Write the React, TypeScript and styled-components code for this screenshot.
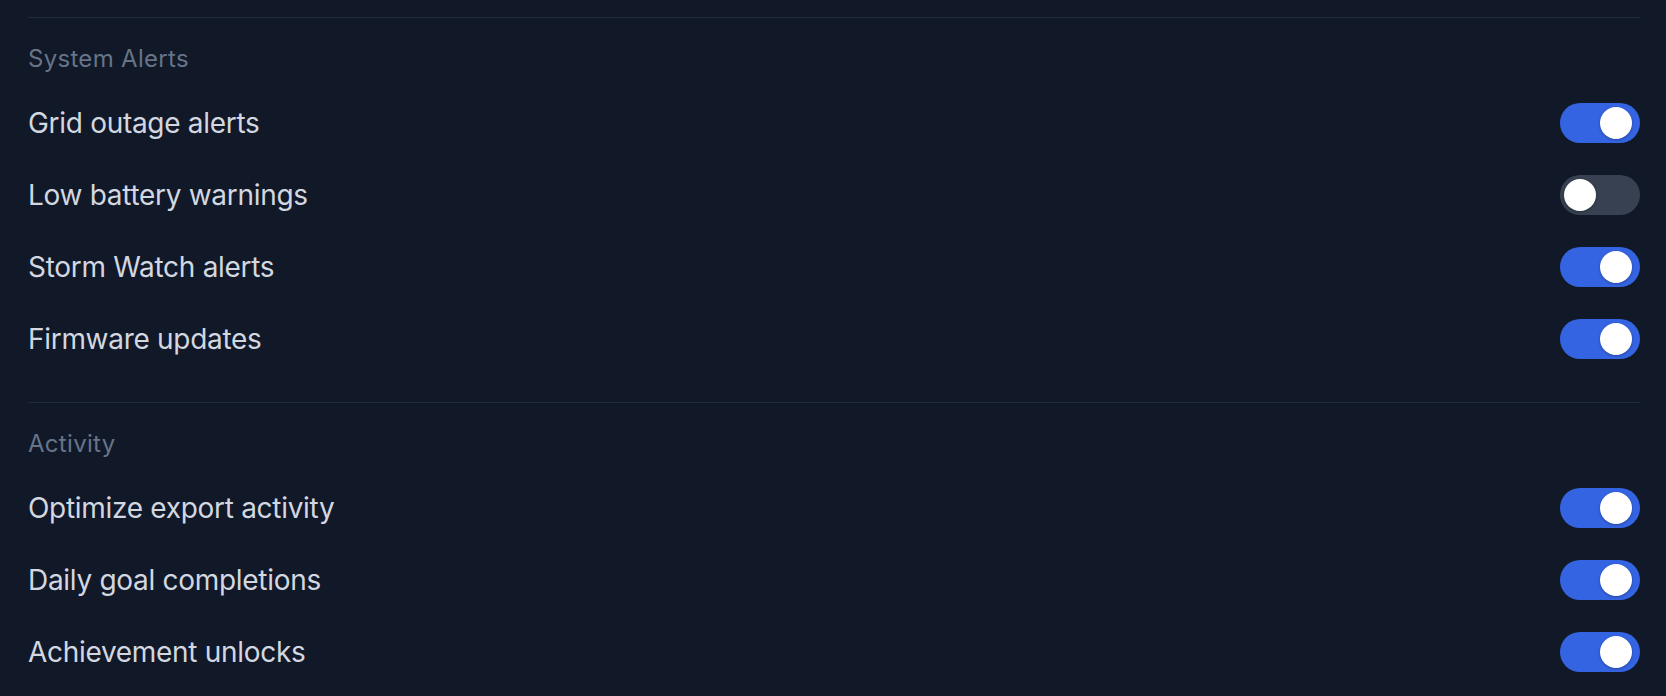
import React, { useState } from "react";
import styled, { createGlobalStyle } from "styled-components";

const GlobalStyle = createGlobalStyle`
  html, body {
    margin: 0;
    padding: 0;
    background: #111827;
  }
  body {
    font-family: Inter, "Noto Sans", "Liberation Sans", sans-serif;
    -webkit-font-smoothing: antialiased;
  }
`;

type Setting = { id: string; label: string; on: boolean };

const initialSections: { title: string; items: Setting[] }[] = [
  {
    title: "System Alerts",
    items: [
      { id: "grid", label: "Grid outage alerts", on: true },
      { id: "battery", label: "Low battery warnings", on: false },
      { id: "storm", label: "Storm Watch alerts", on: true },
      { id: "firmware", label: "Firmware updates", on: true },
    ],
  },
  {
    title: "Activity",
    items: [
      { id: "export", label: "Optimize export activity", on: true },
      { id: "goal", label: "Daily goal completions", on: true },
      { id: "achievement", label: "Achievement unlocks", on: true },
    ],
  },
];

function App() {
  const [sections, setSections] = useState(initialSections);

  const toggle = (sIdx: number, id: string) => {
    setSections((prev) =>
      prev.map((s, i) =>
        i !== sIdx
          ? s
          : {
              ...s,
              items: s.items.map((it) =>
                it.id === id ? { ...it, on: !it.on } : it
              ),
            }
      )
    );
  };

  return (
    <>
      <GlobalStyle />
      <Page>
        {sections.map((section, sIdx) => (
          <Section key={section.title}>
            <SectionTitle>{section.title}</SectionTitle>
            <List>
              {section.items.map((item) => (
                <Row key={item.id}>
                  <Label>{item.label}</Label>
                  <Switch
                    type="button"
                    role="switch"
                    aria-checked={item.on}
                    $on={item.on}
                    onClick={() => toggle(sIdx, item.id)}
                  >
                    <Knob $on={item.on} />
                  </Switch>
                </Row>
              ))}
            </List>
          </Section>
        ))}
      </Page>
    </>
  );
}

const Page = styled.div`
  padding: 17px 26px 0 28px;
  min-height: 696px;
  box-sizing: border-box;
`;

const Section = styled.section`
  border-top: 1px solid #232c3b;
  padding-top: 25px;
  margin-bottom: 27px;
`;

const SectionTitle = styled.h3`
  margin: 0 0 12px;
  font-size: 24px;
  line-height: 32px;
  font-weight: 400;
  letter-spacing: 0.3px;
  color: #667489;
`;

const List = styled.div`
  display: flex;
  flex-direction: column;
`;

const Row = styled.div`
  display: flex;
  align-items: center;
  justify-content: space-between;
  height: 72px;
`;

const Label = styled.span`
  font-size: 28px;
  line-height: 40px;
  letter-spacing: -0.3px;
  color: #d2d7e0;
`;

const Switch = styled.button<{ $on: boolean }>`
  position: relative;
  width: 80px;
  height: 40px;
  border: none;
  border-radius: 20px;
  padding: 0;
  cursor: pointer;
  background: ${(p) => (p.$on ? "#3564e3" : "#374151")};
  transition: background 0.2s ease;
`;

const Knob = styled.span<{ $on: boolean }>`
  position: absolute;
  top: 4px;
  left: 4px;
  width: 32px;
  height: 32px;
  border-radius: 50%;
  background: #ffffff;
  box-shadow: 0 1px 3px rgba(0, 0, 0, 0.3);
  transform: translateX(${(p) => (p.$on ? "36px" : "0")});
  transition: transform 0.2s ease;
`;

export default App;
